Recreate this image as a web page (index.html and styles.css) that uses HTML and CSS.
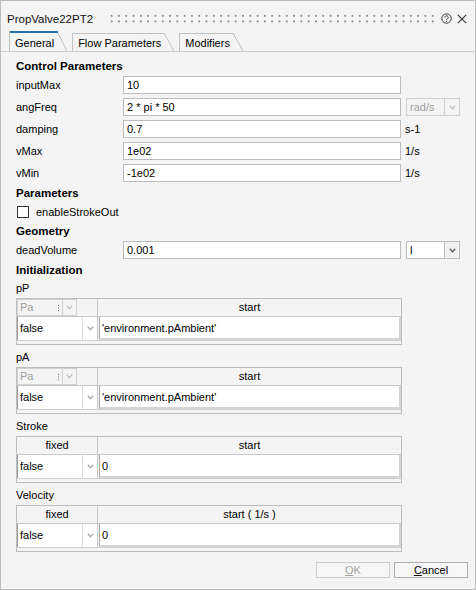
FILE: index.html
```html
<!DOCTYPE html>
<html>
<head>
<meta charset="utf-8">
<link rel="stylesheet" href="styles.css">
</head>
<body>
<div class="window">
  <div class="titlebar">
    <span class="title">PropValve22PT2</span>
    <span class="grip"></span>
    <svg class="help" viewBox="0 0 11 11"><circle cx="5.5" cy="5.5" r="4.7" fill="none" stroke="#3a3a3a" stroke-width="1"/><path d="M3.9 4.4a1.65 1.65 0 1 1 2.5 1.4c-0.6 0.35-0.9 0.6-0.9 1.3" fill="none" stroke="#3a3a3a" stroke-width="1"/><circle cx="5.5" cy="8.3" r="0.65" fill="#3a3a3a"/></svg>
    <svg class="close" viewBox="0 0 10 10"><path d="M0.8 0.8L9.2 9.2M9.2 0.8L0.8 9.2" stroke="#333" stroke-width="1.1"/></svg>
  </div>
  <div class="tabs">
    <div class="tab active">General</div>
    <div class="tab">Flow Parameters</div>
    <div class="tab">Modifiers</div>
  </div>
  <div class="panel">
    <div class="section">Control Parameters</div>
    <div class="row first"><span class="lbl">inputMax</span><span class="input">10</span></div>
    <div class="row"><span class="lbl">angFreq</span><span class="input">2 * pi * 50</span>
      <span class="combo disabled"><span class="ctext">rad/s</span><span class="cbtn"><svg class="chev" viewBox="0 0 7 5"><path d="M0.8 0.8L3.5 3.8L6.2 0.8" fill="none" stroke="currentColor" stroke-width="1.4"/></svg></span></span></div>
    <div class="row"><span class="lbl">damping</span><span class="input">0.7</span><span class="unit">s-1</span></div>
    <div class="row"><span class="lbl">vMax</span><span class="input">1e02</span><span class="unit">1/s</span></div>
    <div class="row"><span class="lbl">vMin</span><span class="input">-1e02</span><span class="unit">1/s</span></div>

    <div class="section gap">Parameters</div>
    <div class="checkrow"><span class="checkbox"></span><span>enableStrokeOut</span></div>

    <div class="section gap">Geometry</div>
    <div class="row first"><span class="lbl">deadVolume</span><span class="input">0.001</span>
      <span class="combo"><span class="ctext">l</span><span class="cbtn"><svg class="chev" viewBox="0 0 7 5"><path d="M0.8 0.8L3.5 3.8L6.2 0.8" fill="none" stroke="currentColor" stroke-width="1.6"/></svg></span></span></div>

    <div class="section gap">Initialization</div>

    <div class="sub firstsub">pP</div>
    <div class="tbl">
      <div class="thead">
        <div class="hc col1 pa">
          <span class="pacombo">Pa<span class="padots"></span></span>
          <span class="pabtn"><svg class="chev" viewBox="0 0 7 5"><path d="M0.8 0.8L3.5 3.8L6.2 0.8" fill="none" stroke="currentColor" stroke-width="1.3"/></svg></span>
          <span class="paempty"></span>
        </div>
        <div class="hc col2">start</div>
      </div>
      <div class="trow">
        <div class="tcombo"><span class="tval">false</span><span class="tarrow"><svg class="chev" viewBox="0 0 7 5"><path d="M0.8 0.8L3.5 3.8L6.2 0.8" fill="none" stroke="currentColor" stroke-width="1.3"/></svg></span></div>
        <div class="tinput">'environment.pAmbient'</div>
      </div>
    </div>

    <div class="sub">pA</div>
    <div class="tbl">
      <div class="thead">
        <div class="hc col1 pa">
          <span class="pacombo">Pa<span class="padots"></span></span>
          <span class="pabtn"><svg class="chev" viewBox="0 0 7 5"><path d="M0.8 0.8L3.5 3.8L6.2 0.8" fill="none" stroke="currentColor" stroke-width="1.3"/></svg></span>
          <span class="paempty"></span>
        </div>
        <div class="hc col2">start</div>
      </div>
      <div class="trow">
        <div class="tcombo"><span class="tval">false</span><span class="tarrow"><svg class="chev" viewBox="0 0 7 5"><path d="M0.8 0.8L3.5 3.8L6.2 0.8" fill="none" stroke="currentColor" stroke-width="1.3"/></svg></span></div>
        <div class="tinput">'environment.pAmbient'</div>
      </div>
    </div>

    <div class="sub">Stroke</div>
    <div class="tbl">
      <div class="thead">
        <div class="hc col1">fixed</div>
        <div class="hc col2">start</div>
      </div>
      <div class="trow">
        <div class="tcombo"><span class="tval">false</span><span class="tarrow"><svg class="chev" viewBox="0 0 7 5"><path d="M0.8 0.8L3.5 3.8L6.2 0.8" fill="none" stroke="currentColor" stroke-width="1.3"/></svg></span></div>
        <div class="tinput">0</div>
      </div>
    </div>

    <div class="sub">Velocity</div>
    <div class="tbl">
      <div class="thead">
        <div class="hc col1">fixed</div>
        <div class="hc col2">start ( 1/s )</div>
      </div>
      <div class="trow">
        <div class="tcombo"><span class="tval">false</span><span class="tarrow"><svg class="chev" viewBox="0 0 7 5"><path d="M0.8 0.8L3.5 3.8L6.2 0.8" fill="none" stroke="currentColor" stroke-width="1.3"/></svg></span></div>
        <div class="tinput">0</div>
      </div>
    </div>
  </div>
  <div class="footer">
    <button class="btn disabled"><u>O</u>K</button>
    <button class="btn"><u>C</u>ancel</button>
  </div>
</div>
</body>
</html>
```

FILE: styles.css
```css
html, body {
  margin: 0;
  padding: 0;
  background: #ffffff;
}
body {
  font-family: "Liberation Sans", Arial, sans-serif;
  font-size: 11px;
  color: #000;
}
.window {
  width: 476px;
  height: 590px;
  box-sizing: border-box;
  border: 1px solid #bdbdbd;
  background: #f4f4f4;
  display: flex;
  flex-direction: column;
  overflow: hidden;
}

/* title bar */
.titlebar {
  height: 30px;
  flex: none;
  display: flex;
  align-items: flex-start;
  padding: 0 8px 0 6px;
}
.title {
  font-size: 11.5px;
  line-height: 14px;
  margin-top: 11px;
  color: #111;
}
.grip {
  flex: 1;
  height: 11px;
  margin: 12.4px 7px 0 15px;
  background-image: radial-gradient(circle, #8c8c8c 0.8px, transparent 1.2px);
  background-size: 7.3px 5.6px;
}
.help {
  width: 11px;
  height: 11px;
  margin-top: 12px;
}
.close {
  width: 10px;
  height: 10px;
  margin: 12.5px 0 0 5px;
}

/* tabs */
.tabs {
  height: 20px;
  flex: none;
  display: flex;
  align-items: flex-end;
  padding-left: 8px;
  gap: 5px;
}
.tab {
  height: 18.5px;
  box-sizing: border-box;
  display: flex;
  align-items: flex-end;
  padding: 0 13px 1px 5px;
  line-height: 14px;
  border-left: 1px solid #c2c2c2;
  background:
    linear-gradient(#c2c2c2, #c2c2c2) left top / calc(100% - 10px) 1px no-repeat,
    linear-gradient(to top right, transparent calc(50% - 0.7px), #b4b4b4 50%, transparent calc(50% + 0.7px)) right top / 10px 100% no-repeat;
}
.tab.active {
  height: 20px;
  border-left-color: #bdbdbd;
  background:
    linear-gradient(#1f73b2, #1f73b2) left top / calc(100% - 9px) 2px no-repeat,
    linear-gradient(to top right, transparent calc(50% - 0.7px), #b4b4b4 50%, transparent calc(50% + 0.7px)) right top / 10px 100% no-repeat;
}

/* panel */
.panel {
  flex: none;
  border-top: 1px solid #cdcdcd;
  padding: 7px 0 0 15px;
}
.section {
  font-weight: bold;
  font-size: 11.5px;
  line-height: 14px;
}
.section.gap {
  margin-top: 4px;
}
.row {
  display: grid;
  grid-template-columns: 107px 278px 60px;
  height: 18px;
  margin-top: 4px;
  align-items: center;
}
.row.first {
  margin-top: 3px;
}
.lbl {
  line-height: 18px;
}
.input {
  box-sizing: border-box;
  height: 18px;
  border: 1px solid #bcbcbc;
  background: #fff;
  padding-left: 3px;
  line-height: 16px;
}
.unit {
  padding-left: 4px;
  line-height: 18px;
}
.combo {
  display: flex;
  height: 18px;
  margin-left: 5px;
}
.ctext {
  box-sizing: border-box;
  width: 39px;
  height: 18px;
  border: 1px solid #bcbcbc;
  background: #fff;
  padding-left: 3px;
  line-height: 16px;
}
.cbtn {
  box-sizing: border-box;
  width: 15px;
  height: 18px;
  border: 1px solid #bcbcbc;
  border-left: none;
  background: #f0f0f0;
  display: flex;
  align-items: center;
  justify-content: center;
  color: #6e6e6e;
}
.combo.disabled .ctext {
  background: #f4f4f4;
  color: #9d9d9d;
  border-color: #cfcfcf;
}
.combo.disabled .cbtn {
  background: #f4f4f4;
  border-color: #cfcfcf;
  color: #c0c0c0;
}
.chev {
  width: 7px;
  height: 5px;
  display: block;
}

.checkrow {
  display: flex;
  align-items: center;
  height: 16px;
  margin-top: 4px;
  gap: 7px;
  line-height: 16px;
}
.checkbox {
  box-sizing: border-box;
  width: 12px;
  height: 12px;
  border: 1px solid #333;
  background: #fff;
  margin-left: 1px;
}

/* initialization tables */
.sub {
  line-height: 14px;
  margin-top: 5px;
}
.sub.firstsub {
  margin-top: 4px;
}
.tbl {
  box-sizing: border-box;
  width: 386px;
  height: 47px;
  margin-top: 3px;
  border: 1px solid #bdbdbd;
  background: #f4f4f4;
}
.thead {
  display: flex;
  height: 18px;
  box-sizing: border-box;
  border-bottom: 1px solid #c8c8c8;
}
.hc {
  box-sizing: border-box;
  line-height: 17px;
  text-align: center;
}
.col1 {
  width: 81px;
  flex: none;
  border-right: 1px solid #c8c8c8;
}
.col2 {
  flex: 1;
}
.hc.pa {
  display: flex;
}
.pacombo {
  box-sizing: border-box;
  width: 46px;
  height: 17px;
  border: 1px solid #d2d2d2;
  color: #a0a0a0;
  text-align: left;
  padding-left: 2px;
  display: flex;
  justify-content: space-between;
  align-items: center;
}
.padots {
  width: 1px;
  height: 8px;
  margin-right: 3px;
  background-image: radial-gradient(circle, #555 0.5px, transparent 0.8px);
  background-size: 1px 2.7px;
}
.pabtn {
  box-sizing: border-box;
  width: 14px;
  height: 17px;
  border: 1px solid #d2d2d2;
  border-left: none;
  display: flex;
  align-items: center;
  justify-content: center;
  color: #c0c0c0;
}
.paempty {
  flex: 1;
}
.trow {
  display: flex;
  height: 24px;
  box-sizing: border-box;
  border-bottom: 1px solid #cfcfcf;
}
.tcombo {
  box-sizing: border-box;
  width: 81px;
  flex: none;
  display: flex;
  background: #fff;
  border-right: 1px solid #c8c8c8;
  border-left: 1px solid #9e9e9e;
}
.tval {
  box-sizing: border-box;
  width: 65px;
  border-right: 1px solid #dcdcdc;
  padding-left: 2px;
  line-height: 23px;
}
.tarrow {
  flex: 1;
  display: flex;
  align-items: center;
  justify-content: center;
  color: #a8a8a8;
}
.tinput {
  flex: 1;
  box-sizing: border-box;
  margin-left: 1px;
  background: #fff;
  border: 2px solid #d4d4d4;
  border-top: none;
  border-left: 1px solid #a8a8a8;
  padding-left: 2px;
  line-height: 22px;
}

/* footer */
.footer {
  margin-top: auto;
  display: flex;
  justify-content: flex-end;
  gap: 4px;
  padding: 0 7px 11px 0;
}
.btn {
  box-sizing: border-box;
  width: 74px;
  height: 16px;
  padding: 0;
  border: 1px solid #adadad;
  background: #f6f6f6;
  font-family: "Liberation Sans", Arial, sans-serif;
  font-size: 11px;
  line-height: 14px;
  color: #000;
}
.btn.disabled {
  color: #a3a3a3;
  border-color: #cccccc;
}
```
